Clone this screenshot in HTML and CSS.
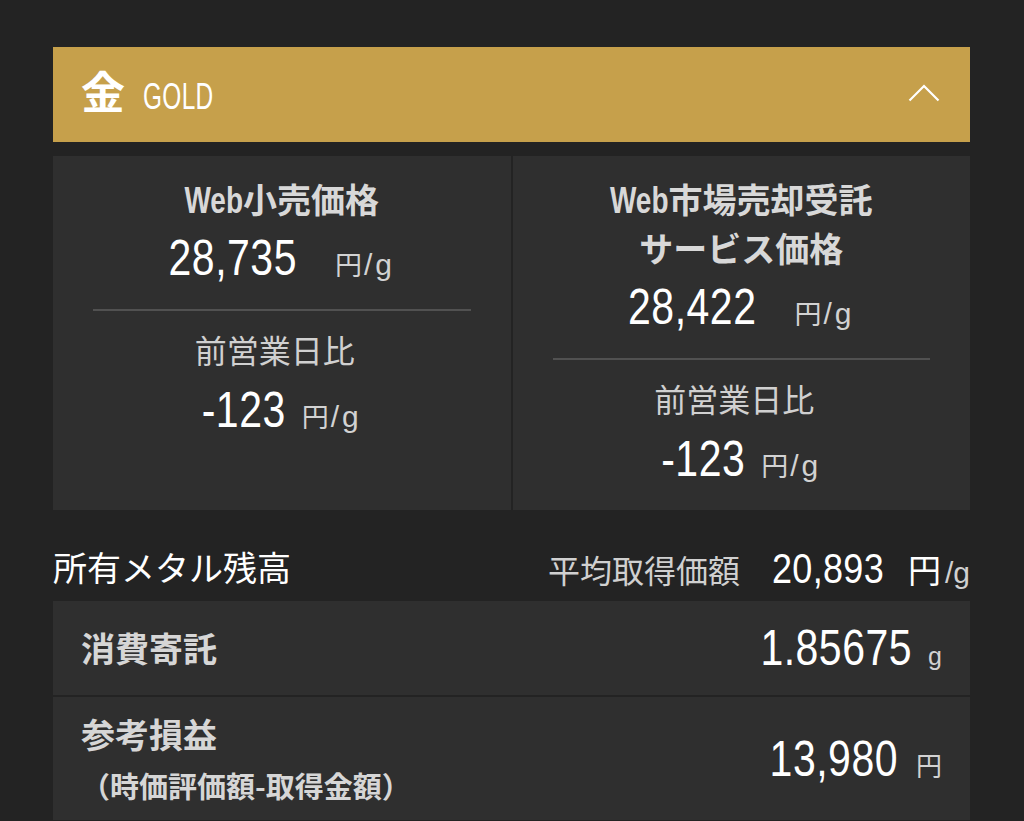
FILE: index.html
```html
<!DOCTYPE html>
<html lang="ja">
<head>
<meta charset="utf-8">
<title>金 GOLD</title>
<link rel="stylesheet" href="styles.css">
</head>
<body>
<div class="page">
  <div class="metal-head">
    <span class="metal-kanji">金</span>
    <span class="metal-en">GOLD</span>
    <svg class="chev" viewBox="0 0 32 19" aria-hidden="true"><polyline points="1.5,17.5 16,3 30.5,17.5" fill="none" stroke="#fff" stroke-width="2.2"/></svg>
  </div>

  <div class="prices">
    <div class="card">
      <div class="card-title"><span class="latin">Web</span>小売価格</div>
      <div class="price"><span class="num">28,735</span><span class="unit"><span class="yen">円</span><span class="per">/g</span></span></div>
      <div class="divider"></div>
      <div class="sub">前営業日比</div>
      <div class="price diff"><span class="num">-123</span><span class="unit"><span class="yen">円</span><span class="per">/g</span></span></div>
    </div>
    <div class="card">
      <div class="card-title"><span class="latin">Web</span>市場売却受託<br>サービス価格</div>
      <div class="price"><span class="num">28,422</span><span class="unit"><span class="yen">円</span><span class="per">/g</span></span></div>
      <div class="divider"></div>
      <div class="sub">前営業日比</div>
      <div class="price diff"><span class="num">-123</span><span class="unit"><span class="yen">円</span><span class="per">/g</span></span></div>
    </div>
  </div>

  <div class="holdings-head">
    <div class="h-title">所有メタル残高</div>
    <div class="avg">
      <span class="avg-label">平均取得価額</span>
      <span class="avg-num">20,893</span>
      <span class="avg-yen">円</span>
      <span class="avg-per">/g</span>
    </div>
  </div>

  <div class="row row-single">
    <div class="row-label">消費寄託</div>
    <div class="val"><span class="num">1.85675</span><span class="val-unit val-g">g</span></div>
  </div>
  <div class="row row-double">
    <div class="label-block">
      <div class="row-label">参考損益</div>
      <div class="row-note">（時価評価額-取得金額）</div>
    </div>
    <div class="val"><span class="num">13,980</span><span class="val-unit val-yen">円</span></div>
  </div>
</div>
</body>
</html>
```

FILE: styles.css
```css
* { box-sizing: border-box; }
html, body { margin: 0; padding: 0; }
body {
  background: #232323;
  color: #fff;
  font-family: "Noto Sans CJK JP", "Noto Sans", sans-serif;
}
.page {
  height: 821px;
  overflow: hidden;
  padding: 47px 54px 0 53px;
}

/* header */
.metal-head {
  height: 95px;
  background: #c6a04b;
  display: flex;
  align-items: center;
  padding: 0 30px 0 28px;
}
.metal-kanji {
  font-size: 44px;
  font-weight: 700;
  line-height: 1;
  color: #fff;
  margin-bottom: 10px;
}
.metal-en {
  display: inline-block;
  font-family: "Liberation Sans", sans-serif;
  font-size: 37px;
  line-height: 1;
  letter-spacing: 0.5px;
  color: #fff;
  margin-left: 18px;
  margin-top: 4px;
  transform: scaleX(0.66);
  transform-origin: left center;
}
.chev {
  margin-left: auto;
  margin-bottom: 4px;
  width: 32px;
  height: 19px;
}

/* price cards */
.prices {
  display: grid;
  grid-template-columns: 1fr 1fr;
  column-gap: 2px;
  margin-top: 14px;
}
.card {
  background: #2f2f2f;
  padding: 18px 0 20px;
  display: flex;
  flex-direction: column;
  align-items: center;
  text-align: center;
}
.card-title {
  font-size: 34px;
  font-weight: 700;
  line-height: 49px;
  color: #d8d8d8;
}
.latin {
  display: inline-block;
  font-family: "Liberation Sans", sans-serif;
  font-weight: 700;
  font-size: 28px;
  line-height: 1;
  transform: scaleY(1.3);
  transform-origin: 50% 80%;
}
.price {
  display: flex;
  align-items: baseline;
  justify-content: center;
  height: 48px;
  margin-top: 17.5px;
}
.num {
  font-family: "Liberation Sans", sans-serif;
  font-size: 41px;
  line-height: 1;
  letter-spacing: 0.5px;
  color: #fff;
  transform: scaleY(1.2);
  transform-origin: 50% 34.7px;
}
.unit {
  display: flex;
  align-items: baseline;
  margin-left: 38px;
  color: #d2d2d2;
  line-height: 1;
}
.diff { margin-top: 22.3px; }
.diff .unit { margin-left: 16px; }
.yen {
  font-size: 27px;
  line-height: 1;
}
.per {
  font-family: "Liberation Sans", sans-serif;
  font-size: 30px;
  line-height: 1;
  letter-spacing: 3px;
  margin-left: 2px;
}
.divider {
  align-self: stretch;
  height: 2px;
  margin: 20.7px 40px 0;
  background: #515151;
}
.sub {
  font-size: 32px;
  line-height: 44px;
  color: #d0d0d0;
  margin-top: 16px;
  padding-right: 14px;
}

/* holdings */
.holdings-head {
  height: 91px;
  padding-top: 35px;
  display: flex;
  justify-content: space-between;
  align-items: flex-start;
}
.h-title {
  font-size: 34px;
  line-height: 44px;
  color: #fff;
}
.avg {
  display: flex;
  align-items: baseline;
  margin-top: 8px;
}
.avg-label {
  font-size: 32px;
  line-height: 1;
  color: #d0d0d0;
  margin-right: 32px;
}
.avg-num {
  font-family: "Liberation Sans", sans-serif;
  font-size: 36px;
  line-height: 1;
  letter-spacing: 0.3px;
  color: #fff;
  transform: scaleY(1.16);
  transform-origin: 50% 30.5px;
}
.avg-yen {
  font-size: 33px;
  line-height: 1;
  color: #fff;
  margin-left: 24px;
}
.avg-per {
  font-family: "Liberation Sans", sans-serif;
  font-size: 30px;
  line-height: 1;
  color: #d0d0d0;
  margin-left: 4px;
}

.row {
  background: #2f2f2f;
  display: flex;
  justify-content: space-between;
  align-items: center;
  padding: 0 28px;
}
.row-single {
  height: 94px;
  margin-bottom: 2px;
}
.row-double {
  padding-top: 15px;
  padding-bottom: 15px;
}
.row-label {
  font-size: 34px;
  font-weight: 700;
  line-height: 44px;
  color: #d6d6d6;
}
.row-note {
  font-size: 29px;
  font-weight: 700;
  line-height: 40px;
  color: #d6d6d6;
  margin-top: 9px;
}
.val {
  display: flex;
  align-items: baseline;
  padding-top: 7px;
}
.val-unit {
  color: #d2d2d2;
  line-height: 1;
}
.val-g {
  font-family: "Liberation Sans", sans-serif;
  font-size: 25px;
  margin-left: 16px;
}
.val-yen {
  font-size: 26px;
  margin-left: 18px;
}
```
